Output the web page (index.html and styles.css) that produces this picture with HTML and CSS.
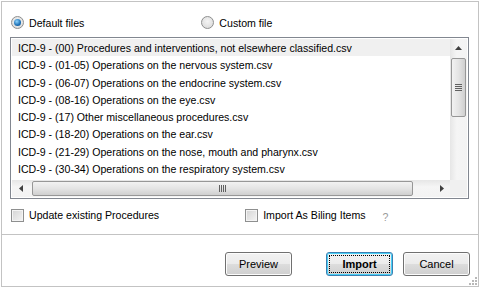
FILE: index.html
```html
<!DOCTYPE html>
<html lang="en">
<head>
    <meta charset="UTF-8">
    <title>Import Procedures</title>
    <link rel="stylesheet" href="styles.css">
</head>
<body>
    <div class="dialog">
        <div class="top">
            <div class="sources">
                <label class="radio checked"><span class="dot"></span>Default files</label>
                <label class="radio custom"><span class="dot"></span>Custom file</label>
            </div>

            <div class="listbox">
                <div class="items">
                    <div class="item selected">ICD-9 - (00) Procedures and interventions, not elsewhere classified.csv</div>
                    <div class="item">ICD-9 - (01-05) Operations on the nervous system.csv</div>
                    <div class="item">ICD-9 - (06-07) Operations on the endocrine system.csv</div>
                    <div class="item">ICD-9 - (08-16) Operations on the eye.csv</div>
                    <div class="item">ICD-9 - (17) Other miscellaneous procedures.csv</div>
                    <div class="item">ICD-9 - (18-20) Operations on the ear.csv</div>
                    <div class="item">ICD-9 - (21-29) Operations on the nose, mouth and pharynx.csv</div>
                    <div class="item">ICD-9 - (30-34) Operations on the respiratory system.csv</div>
                </div>
                <div class="vscroll">
                    <div class="arrow"><svg width="7" height="4" viewBox="0 0 7 4"><path d="M0 4 L3.5 0 L7 4 Z" fill="#404040"/></svg></div>
                    <div class="vthumb">
                        <svg width="7" height="7" viewBox="0 0 7 7"><path d="M0 0.5H7M0 2.5H7M0 4.5H7M0 6.5H7" stroke="#606060" stroke-width="1"/></svg>
                    </div>
                </div>
                <div class="hscroll">
                    <div class="arrow"><svg width="4" height="7" viewBox="0 0 4 7"><path d="M4 0 L0 3.5 L4 7 Z" fill="#404040"/></svg></div>
                    <div class="hthumb">
                        <svg width="7" height="7" viewBox="0 0 7 7"><path d="M0.5 0V7M2.5 0V7M4.5 0V7M6.5 0V7" stroke="#606060" stroke-width="1"/></svg>
                    </div>
                    <div class="track"></div>
                    <div class="arrow"><svg width="4" height="7" viewBox="0 0 4 7"><path d="M0 0 L4 3.5 L0 7 Z" fill="#404040"/></svg></div>
                </div>
                <div class="corner"></div>
            </div>

            <div class="options">
                <label class="check"><span class="box"></span>Update existing Procedures</label>
                <label class="check billing"><span class="box"></span>Import As Biling Items</label>
                <span class="help">?</span>
            </div>
        </div>

        <div class="buttons">
            <button class="btn">Preview</button>
            <button class="btn primary"><span>Import</span></button>
            <button class="btn">Cancel</button>
            <svg class="grip" width="8" height="8" viewBox="0 0 8 8">
                <rect x="6" y="0" width="2" height="2" fill="#b8b8b8"/>
                <rect x="3" y="3" width="2" height="2" fill="#b8b8b8"/>
                <rect x="6" y="3" width="2" height="2" fill="#b8b8b8"/>
                <rect x="0" y="6" width="2" height="2" fill="#b8b8b8"/>
                <rect x="3" y="6" width="2" height="2" fill="#b8b8b8"/>
                <rect x="6" y="6" width="2" height="2" fill="#b8b8b8"/>
            </svg>
        </div>
    </div>
</body>
</html>
```

FILE: styles.css
```css
/* dialog frame */
body {
    margin: 0;
    padding: 1px;
    background: #ffffff;
    font-family: "Liberation Sans", Arial, sans-serif;
    font-size: 10.6px;
    color: #000;
}

.dialog {
    width: 476px;
    height: 284px;
    border: 1px solid #c3c3c3;
    display: flex;
    flex-direction: column;
}

.top {
    height: 232px;
    border-bottom: 1px solid #c3c3c3;
    padding: 0 9px 0 8px;
}

/* source radios */
.sources {
    display: flex;
    align-items: center;
    height: 34px;
    padding-top: 7px;
    box-sizing: border-box;
}

.radio {
    display: flex;
    align-items: center;
    gap: 5px;
    padding-left: 1px;
}

.radio.custom {
    margin-left: 116px;
}

.radio .dot {
    width: 11px;
    height: 11px;
    border: 1px solid #8e8f8f;
    border-radius: 50%;
    background: radial-gradient(circle at 50% 40%, #f4f4f4, #d6d6d6);
    box-sizing: content-box;
    position: relative;
}

.radio.checked .dot::after {
    content: "";
    position: absolute;
    left: 2px;
    top: 2px;
    width: 7px;
    height: 7px;
    border-radius: 50%;
    background: radial-gradient(circle at 40% 35%, #8fd5ff, #1b6fb5 60%, #0d4d87);
}

/* file list */
.listbox {
    margin-top: 1px;
    height: 158px;
    border: 1px solid #828790;
    padding: 1px;
    display: grid;
    grid-template-columns: 1fr 17px;
    grid-template-rows: 1fr 17px;
}

.items {
    overflow: hidden;
}

.item {
    height: 17.3px;
    line-height: 19px;
    padding-left: 6px;
    white-space: nowrap;
}

.item.selected {
    background: #f0f0f0;
}

.vscroll {
    background: linear-gradient(to right, #e6e6e6, #f5f5f5 40%, #f3f3f3);
    display: flex;
    flex-direction: column;
    align-items: center;
}

.vscroll .arrow {
    height: 17px;
    display: flex;
    align-items: center;
    justify-content: center;
}

.vthumb {
    width: 15px;
    height: 59px;
    margin-top: 2px;
    box-sizing: border-box;
    border: 1px solid #979797;
    border-radius: 2px;
    background: linear-gradient(to right, #f2f2f2, #e4e4e4 50%, #cfcfcf);
    display: flex;
    align-items: center;
    justify-content: center;
}

.hscroll {
    background: linear-gradient(to bottom, #e6e6e6, #f5f5f5 40%, #f3f3f3);
    display: flex;
    align-items: center;
}

.hscroll .arrow {
    width: 17px;
    height: 17px;
    display: flex;
    align-items: center;
    justify-content: center;
}

.hthumb {
    width: 381px;
    height: 15px;
    margin-left: 3px;
    box-sizing: border-box;
    border: 1px solid #979797;
    border-radius: 2px;
    background: linear-gradient(to bottom, #f2f2f2, #e4e4e4 50%, #cfcfcf);
    display: flex;
    align-items: center;
    justify-content: center;
}

.hscroll .track {
    flex: 1;
}

.corner {
    background: #f0f0f0;
}

/* checkboxes */
.options {
    display: flex;
    align-items: center;
    height: 32px;
    padding-left: 1px;
}

.check {
    display: flex;
    align-items: center;
    gap: 5px;
}

.check.billing {
    margin-left: 86px;
}

.check .box {
    width: 11px;
    height: 11px;
    border: 1px solid #8e8f8f;
    background: linear-gradient(135deg, #d4d4d4, #f4f4f4);
    box-shadow: inset 0 0 0 1px #f4f4f4;
    box-sizing: content-box;
}

.help {
    margin-left: 17px;
    margin-top: 4px;
    color: #9a9a9a;
}

/* buttons */
.buttons {
    flex: 1;
    display: flex;
    justify-content: flex-end;
    align-items: flex-start;
    padding: 17px 8px 0 0;
    gap: 10px;
    position: relative;
}

.btn {
    width: 67px;
    height: 24px;
    font-family: inherit;
    font-size: 11px;
    color: #000;
    border: 1px solid #707070;
    border-radius: 3px;
    background: linear-gradient(to bottom, #f2f2f2, #ebebeb 50%, #dddddd 50%, #cfcfcf);
    box-shadow: inset 0 0 0 1px #fcfcfc;
    padding: 0;
}

.btn:first-child {
    margin-right: 24px;
}

.btn.primary {
    border-color: #3c7fb1;
    font-weight: bold;
    box-shadow: inset 0 0 0 1px #48d0f8;
    padding: 2px;
}

.btn.primary span {
    display: flex;
    align-items: center;
    justify-content: center;
    height: 100%;
    border: 1px dotted #000;
    box-sizing: border-box;
}

.grip {
    position: absolute;
    right: 1px;
    bottom: 1px;
}
```
